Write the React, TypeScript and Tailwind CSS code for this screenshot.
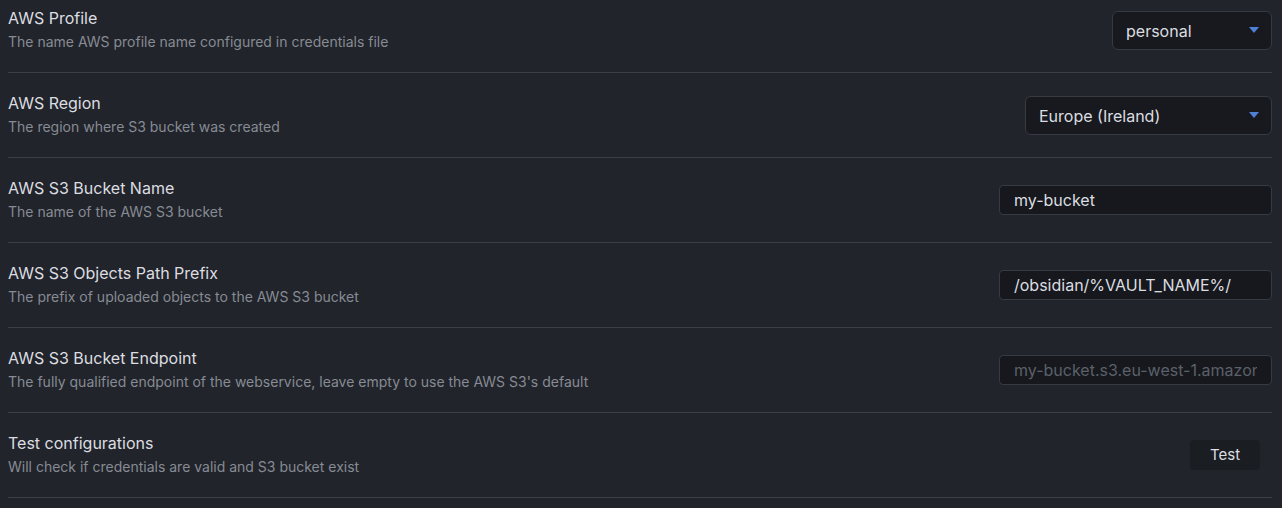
const rows = [
  { name: 'AWS Profile', desc: 'The name AWS profile name configured in credentials file', kind: 'select', value: 'personal', w: 'w-[160px]' },
  { name: 'AWS Region', desc: 'The region where S3 bucket was created', kind: 'select', value: 'Europe (Ireland)', w: 'w-[247px]' },
  { name: 'AWS S3 Bucket Name', desc: 'The name of the AWS S3 bucket', kind: 'input', value: 'my-bucket' },
  { name: 'AWS S3 Objects Path Prefix', desc: 'The prefix of uploaded objects to the AWS S3 bucket', kind: 'input', value: '/obsidian/%VAULT_NAME%/' },
  { name: 'AWS S3 Bucket Endpoint', desc: "The fully qualified endpoint of the webservice, leave empty to use the AWS S3's default", kind: 'placeholder', value: 'my-bucket.s3.eu-west-1.amazonaws.com' },
  { name: 'Test configurations', desc: 'Will check if credentials are valid and S3 bucket exist', kind: 'button', value: 'Test' },
];

function Control({ row }: { row: (typeof rows)[number] }) {
  if (row.kind === 'select') {
    return (
      <div className={`${row.w} h-[39px] flex items-center justify-between pl-[13px] pr-[12px] rounded-[6px] border border-[#363a42] bg-[#17191e] text-[16px] text-[#dcdde0]`}>
        <span className="pt-[1px]">{row.value}</span>
        <svg width="10" height="6" viewBox="0 0 10 6">
          <path d="M0 0 H10 L5 6 Z" fill="#4f80d8" />
        </svg>
      </div>
    );
  }
  if (row.kind === 'button') {
    return (
      <button className="mr-[12px] w-[70px] h-[30px] rounded-[4px] bg-[#1a1d22] text-[15px] text-[#dcdde0]">
        {row.value}
      </button>
    );
  }
  return (
    <input
      readOnly
      className="w-[273px] h-[30px] px-[14px] rounded-[4px] border border-[#363a42] bg-[#16181d] text-[16px] text-[#dcdde0] placeholder:text-[#5b6069] outline-none"
      defaultValue={row.kind === 'input' ? row.value : undefined}
      placeholder={row.kind === 'placeholder' ? row.value : undefined}
    />
  );
}

export default function App() {
  return (
    <div className="w-[1282px] h-[508px] overflow-hidden bg-[#21242b] pl-[8px] pr-[10px] font-['Inter',sans-serif]">
      <div className="-mt-[12px]">
        {rows.map(row => (
          <div key={row.name} className="h-[85px] flex items-center justify-between border-b border-[#3c3f47]">
            <div className="flex flex-col gap-[4px] mb-[2px]">
              <div className="text-[16px] leading-[22px] text-[#dcdde0]">{row.name}</div>
              <div className="text-[14px] leading-[18px] text-[#878b93]">{row.desc}</div>
            </div>
            <Control row={row} />
          </div>
        ))}
      </div>
    </div>
  );
}
